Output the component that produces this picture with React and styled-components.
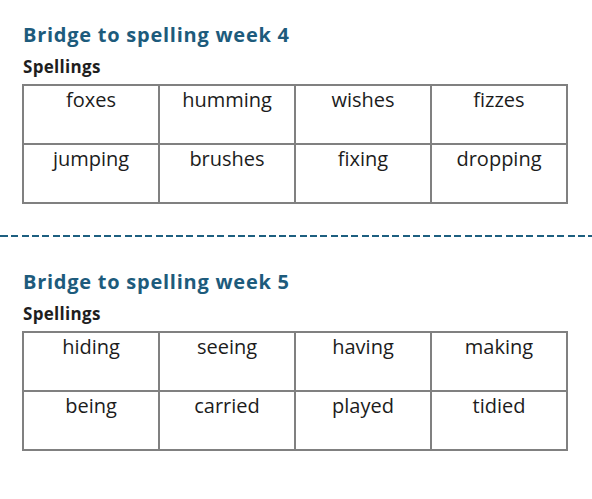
import React from 'react';
import styled, { createGlobalStyle } from 'styled-components';

const GlobalStyle = createGlobalStyle`
  body {
    margin: 0;
    background: #ffffff;
    font-family: "Open Sans", "Liberation Sans", sans-serif;
  }
`;

const Page = styled.div`
  width: 592px;
  padding: 0 0 40px;
`;

const Section = styled.section`
  padding: ${props => props.top}px 0 0 22px;
`;

const Title = styled.h2`
  margin: 0 0 10px 1px;
  font-size: 20px;
  line-height: 24px;
  font-weight: 700;
  color: #1d5b7c;
  letter-spacing: 0.75px;
`;

const Label = styled.h3`
  margin: 0 0 7px 1px;
  font-size: 17px;
  line-height: 20px;
  font-weight: 700;
  color: #1e1e1e;
  letter-spacing: 0.3px;
`;

const Grid = styled.div`
  width: 546px;
  box-sizing: border-box;
  display: grid;
  grid-template-columns: repeat(4, 134px);
  grid-auto-rows: 57px;
  gap: 2px;
  padding: 2px;
  background: #808080;
`;

const Cell = styled.div`
  background: #ffffff;
  padding-top: 2px;
  text-align: center;
  font-size: 20px;
  line-height: 24px;
  color: #1c1c1c;
`;

const Divider = styled.div`
  height: 2px;
  margin-top: 31px;
  background: repeating-linear-gradient(
    to right,
    #1d5f80 0 7px,
    transparent 7px 10.3px
  );
  background-position: 1px 0;
`;

const weeks = [
  {
    week: 4,
    top: 23,
    words: ['foxes', 'humming', 'wishes', 'fizzes', 'jumping', 'brushes', 'fixing', 'dropping'],
  },
  {
    week: 5,
    top: 33,
    words: ['hiding', 'seeing', 'having', 'making', 'being', 'carried', 'played', 'tidied'],
  },
];

const SpellingSection = ({ week, top, words }) => (
  <Section top={top}>
    <Title>Bridge to spelling week {week}</Title>
    <Label>Spellings</Label>
    <Grid>
      {words.map(word => (
        <Cell key={word}>{word}</Cell>
      ))}
    </Grid>
  </Section>
);

const App = () => (
  <Page>
    <GlobalStyle />
    <SpellingSection {...weeks[0]} />
    <Divider />
    <SpellingSection {...weeks[1]} />
  </Page>
);

export default App;
